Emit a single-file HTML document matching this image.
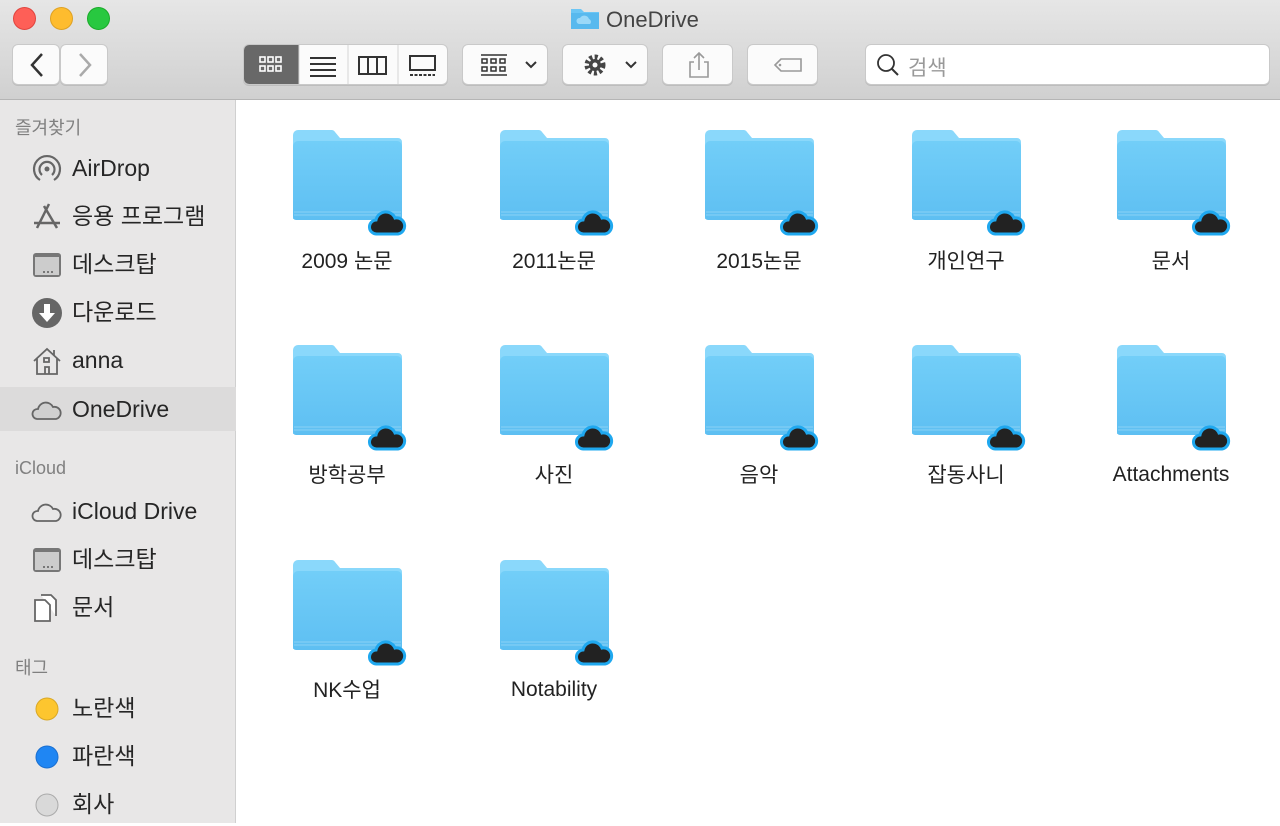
<!DOCTYPE html>
<html><head><meta charset="utf-8"><style>
*{margin:0;padding:0;box-sizing:border-box}
body{width:1280px;height:823px;overflow:hidden;font-family:"Liberation Sans","Noto Sans CJK KR",sans-serif;background:#fff;position:relative}
.tb{position:absolute;left:0;top:0;width:1280px;height:100px;background:linear-gradient(#e6e6e6,#d0d0d0);border-bottom:1px solid #b5b5b5}
.dot{position:absolute;top:7px;width:23px;height:23px;border-radius:50%}
.btn{position:absolute;top:44px;height:41px;background:#fbfbfb;border:1px solid #c9c9c9;border-radius:6px;box-shadow:0 1px 0 #bdbdbd}
.title{position:absolute;left:570px;top:6px;font-size:22px;color:#444}
.sb{position:absolute;left:0;top:100px;width:236px;height:723px;background:#e8e7e7;border-right:1px solid #d0d0d0}
.hd{position:absolute;left:15px;font-size:18px;color:#808080}
.it{position:absolute;left:0;width:236px;height:44px;font-size:23px;color:#262626;padding-left:72px;line-height:44px}
.ic{position:absolute;left:31px;top:7px;width:32px;height:32px}
.f{position:absolute;width:120px;height:110px}
.lb{position:absolute;width:200px;text-align:center;font-size:21px;color:#222;line-height:26px}
</style></head><body>
<div class="tb">
<div class="dot" style="left:13px;background:#fe5f57;border:1px solid #e0443e"></div>
<div class="dot" style="left:50px;background:#febc2e;border:1px solid #dea123"></div>
<div class="dot" style="left:87px;background:#28c840;border:1px solid #1aab29"></div>
<div class="title"><svg width="30" height="24" style="vertical-align:-3px;margin-right:6px" viewBox="0 0 30 24"><path d="M1 3h10l3 3h15v17H1z" fill="#6cc6f5"/><path d="M1 7h28v16H1z" fill="#58b9ee"/><path d="M9 18a3 3 0 0 1 1-6 5 5 0 0 1 9 1 3 3 0 0 1 1 5z" fill="#9ad8f8"/></svg>OneDrive</div>
<div class="btn" style="left:12px;width:48px"><svg width="48" height="41"><path d="M29 9 19 20l10 11" stroke="#333" stroke-width="2.5" fill="none"/></svg></div>
<div class="btn" style="left:60px;width:48px"><svg width="48" height="41"><path d="M19 9l10 11-10 11" stroke="#aaa" stroke-width="2.5" fill="none"/></svg></div>
<div class="btn" style="left:243px;width:205px;overflow:hidden;padding:0">
<div style="position:absolute;left:0;top:0;width:55px;height:41px;background:#686868"></div>
<svg width="205" height="41" style="position:absolute;left:0;top:0">
<g fill="none" stroke="#fff" stroke-width="1.6"><rect x="16" y="12" width="5" height="5"/><rect x="24" y="12" width="5" height="5"/><rect x="32" y="12" width="5" height="5"/><rect x="16" y="21" width="5" height="5"/><rect x="24" y="21" width="5" height="5"/><rect x="32" y="21" width="5" height="5"/></g>
<g stroke="#333" stroke-width="2"><path d="M66 13h26M66 19h26M66 25h26M66 31h26"/></g>
<line x1="104" y1="0" x2="104" y2="41" stroke="#d5d5d5"/><line x1="55" y1="0" x2="55" y2="41" stroke="#d5d5d5"/><line x1="154" y1="0" x2="154" y2="41" stroke="#d5d5d5"/>
<g fill="none" stroke="#333" stroke-width="2"><rect x="115" y="12" width="27" height="17"/><path d="M124 12v17M133 12v17"/><rect x="166" y="11" width="25" height="14"/></g>
<path d="M166 30h25" stroke="#333" stroke-width="2" stroke-dasharray="3 1.5"/>
</svg></div>
<div class="btn" style="left:462px;width:86px"><svg width="86" height="41"><g fill="none" stroke="#333" stroke-width="1.5"><path d="M18 10h26M18 30h26"/><rect x="19" y="14" width="5" height="4"/><rect x="28" y="14" width="5" height="4"/><rect x="37" y="14" width="5" height="4"/><rect x="19" y="22" width="5" height="4"/><rect x="28" y="22" width="5" height="4"/><rect x="37" y="22" width="5" height="4"/></g><path d="M63 17l5 5 5-5" stroke="#333" stroke-width="2" fill="none"/></svg></div>
<div class="btn" style="left:562px;width:86px"><svg width="86" height="41"><circle cx="32" cy="20" r="8" fill="none" stroke="#444" stroke-width="5" stroke-dasharray="3 2.3"/><circle cx="32" cy="20" r="6" fill="#444"/><circle cx="32" cy="20" r="2.5" fill="#fbfbfb"/><path d="M63 17l5 5 5-5" stroke="#333" stroke-width="2" fill="none"/></svg></div>
<div class="btn" style="left:662px;width:71px"><svg width="71" height="41"><g fill="none" stroke="#999" stroke-width="1.6"><path d="M31 17h-4v15h18V17h-4M36 25V8M31 13l5-5 5 5"/></g></svg></div>
<div class="btn" style="left:747px;width:71px"><svg width="71" height="41"><path d="M27 20l6-6h20v12H33z" fill="none" stroke="#999" stroke-width="1.6"/><circle cx="32" cy="20" r="1.3" fill="#999"/></svg></div>
<div class="btn" style="left:865px;width:405px;background:#fff"><svg width="30" height="41" style="position:absolute;left:8px"><circle cx="12" cy="18" r="8" fill="none" stroke="#333" stroke-width="1.8"/><path d="M18 24l6 6" stroke="#333" stroke-width="2"/></svg><span style="position:absolute;left:42px;top:7px;font-size:21px;color:#999">검색</span></div>
</div>
<div class="sb">
<div class="hd" style="top:14px">즐겨찾기</div>
<div class="it" style="top:46px"><svg class="ic" viewBox="0 0 32 32"><g fill="none" stroke="#666" stroke-width="2.2"><path d="M9 27A13 13 0 1 1 23 27"/><path d="M11 22a7.5 7.5 0 1 1 10 0"/></g><circle cx="16" cy="16" r="2.5" fill="#666"/></svg>AirDrop</div>
<div class="it" style="top:94px"><svg class="ic" viewBox="0 0 32 32"><g stroke="#666" stroke-width="2.5" fill="none"><path d="M18 3 6 27M13 5l13 22M3 22h26"/></g></svg>응용 프로그램</div>
<div class="it" style="top:142px"><svg class="ic" viewBox="0 0 32 32"><rect x="2" y="4" width="28" height="24" rx="3" fill="#777"/><rect x="4" y="8" width="24" height="18" fill="#ccc"/><path d="M12 23h2M16 23h2M20 23h2" stroke="#777" stroke-width="2"/></svg>데스크탑</div>
<div class="it" style="top:190px"><svg class="ic" viewBox="0 0 32 32"><circle cx="16" cy="16" r="15" fill="#666"/><path d="M13 7h6v9h5l-8 9-8-9h5z" fill="#fff"/></svg>다운로드</div>
<div class="it" style="top:238px"><svg class="ic" viewBox="0 0 32 32"><path d="M3 16 16 4l13 12M6 13v16h20V13M23 5v5M14 29v-7h4v7M13 13h5v4h-5z" fill="none" stroke="#666" stroke-width="1.8"/></svg>anna</div>
<div class="it" style="top:287px;background:#dcdbdb"><svg class="ic" viewBox="0 0 32 32"><path d="M6 25a5 5 0 0 1 1-10 8 8 0 0 1 15-2 6 6 0 0 1 3 12z" fill="#d0d0d0" stroke="#666" stroke-width="1.8"/></svg>OneDrive</div>
<div class="hd" style="top:358px">iCloud</div>
<div class="it" style="top:389px"><svg class="ic" viewBox="0 0 32 32"><path d="M6 25a5 5 0 0 1 1-10 8 8 0 0 1 15-2 6 6 0 0 1 3 12z" fill="none" stroke="#666" stroke-width="1.8"/></svg>iCloud Drive</div>
<div class="it" style="top:437px"><svg class="ic" viewBox="0 0 32 32"><rect x="2" y="4" width="28" height="24" rx="3" fill="#777"/><rect x="4" y="8" width="24" height="18" fill="#ccc"/><path d="M12 23h2M16 23h2M20 23h2" stroke="#777" stroke-width="2"/></svg>데스크탑</div>
<div class="it" style="top:485px"><svg class="ic" viewBox="0 0 32 32"><path d="M4 8h10l5 5v16H4zM10 3h10l5 5v16" fill="#fff" stroke="#666" stroke-width="1.8"/></svg>문서</div>
<div class="hd" style="top:554px">태그</div>
<div class="it" style="top:586px"><svg class="ic" viewBox="0 0 32 32"><circle cx="16" cy="16" r="11" fill="#fdc62f" stroke="#d9a826"/></svg>노란색</div>
<div class="it" style="top:634px"><svg class="ic" viewBox="0 0 32 32"><circle cx="16" cy="16" r="11" fill="#1f86f3" stroke="#1a6fd0"/></svg>파란색</div>
<div class="it" style="top:682px"><svg class="ic" viewBox="0 0 32 32"><circle cx="16" cy="16" r="11" fill="#d9d9d9" stroke="#aaa"/></svg>회사</div>
</div>
<svg width="0" height="0" style="position:absolute"><defs>
<linearGradient id="g" x1="0" y1="0" x2="0" y2="1"><stop offset="0" stop-color="#72cef8"/><stop offset="1" stop-color="#5ebff2"/></linearGradient>
<symbol id="fo" viewBox="0 0 120 110">
<path d="M1 6a5 5 0 0 1 5-5h34a4 4 0 0 1 3 2l5 6h58a4 4 0 0 1 4 4v77H1z" fill="#8ad8fb"/>
<path d="M1 17a5 5 0 0 1 5-5h99a5 5 0 0 1 5 5v71a3 3 0 0 1-3 3H4a3 3 0 0 1-3-3z" fill="url(#g)"/>
<path d="M2 83h107M2 86h107" stroke="#8ad2f6" stroke-width="1"/>
<path d="M85 105a7 7 0 0 1-1-14 10 10 0 0 1 19-2 7.5 7.5 0 0 1 3 16z" fill="#222" stroke="#1fa8ef" stroke-width="3"/>
</symbol></defs></svg>
<svg class="f" style="left:292px;top:129px"><use href="#fo"/></svg>
<svg class="f" style="left:499px;top:129px"><use href="#fo"/></svg>
<svg class="f" style="left:704px;top:129px"><use href="#fo"/></svg>
<svg class="f" style="left:911px;top:129px"><use href="#fo"/></svg>
<svg class="f" style="left:1116px;top:129px"><use href="#fo"/></svg>
<svg class="f" style="left:292px;top:344px"><use href="#fo"/></svg>
<svg class="f" style="left:499px;top:344px"><use href="#fo"/></svg>
<svg class="f" style="left:704px;top:344px"><use href="#fo"/></svg>
<svg class="f" style="left:911px;top:344px"><use href="#fo"/></svg>
<svg class="f" style="left:1116px;top:344px"><use href="#fo"/></svg>
<svg class="f" style="left:292px;top:559px"><use href="#fo"/></svg>
<svg class="f" style="left:499px;top:559px"><use href="#fo"/></svg>
<div class="lb" style="left:247px;top:249px">2009 논문</div>
<div class="lb" style="left:454px;top:249px">2011논문</div>
<div class="lb" style="left:659px;top:249px">2015논문</div>
<div class="lb" style="left:866px;top:249px">개인연구</div>
<div class="lb" style="left:1071px;top:249px">문서</div>
<div class="lb" style="left:247px;top:463px">방학공부</div>
<div class="lb" style="left:454px;top:463px">사진</div>
<div class="lb" style="left:659px;top:463px">음악</div>
<div class="lb" style="left:866px;top:463px">잡동사니</div>
<div class="lb" style="left:1071px;top:462px">Attachments</div>
<div class="lb" style="left:247px;top:678px">NK수업</div>
<div class="lb" style="left:454px;top:677px">Notability</div>
</body></html>
